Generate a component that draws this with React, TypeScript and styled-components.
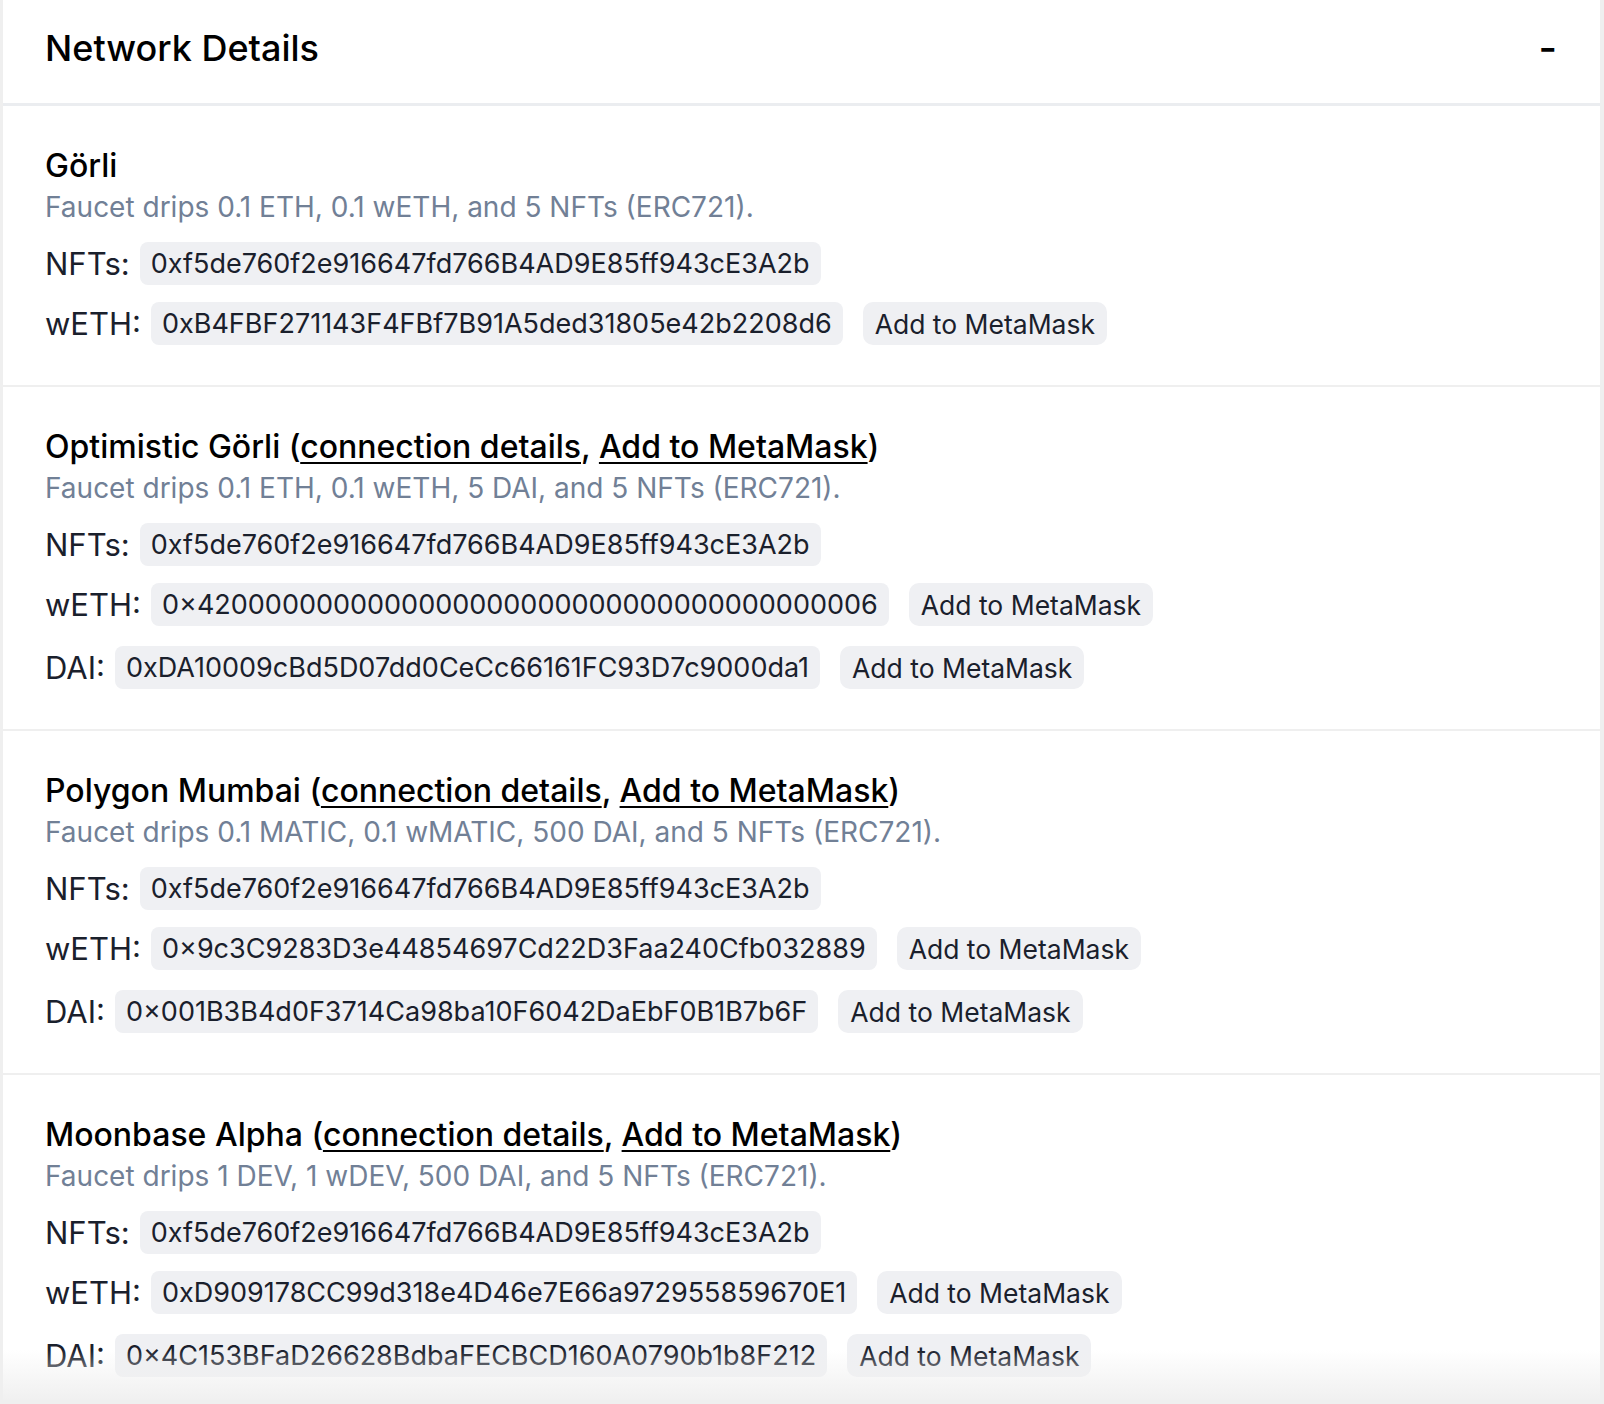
import React from "react";
import styled, { createGlobalStyle } from "styled-components";

const GlobalStyle = createGlobalStyle`
  html, body {
    margin: 0;
    padding: 0;
    background: #efefef;
    font-family: Inter, "Noto Sans", sans-serif;
  }
`;

const Page = styled.div`
  padding: 0 4px 4px 3px;
`;

const Card = styled.div`
  position: relative;
  height: 1400px;
  overflow: hidden;
  background: #fff;

  &::after {
    content: "";
    position: absolute;
    left: 0;
    right: 0;
    bottom: 0;
    height: 50px;
    background: linear-gradient(to bottom, rgba(240, 240, 240, 0), #f0f0f0);
    pointer-events: none;
  }
`;

const Header = styled.div`
  display: flex;
  align-items: center;
  justify-content: space-between;
  height: 95px;
  padding: 0 43px 8px 42px;
  border-bottom: 3px solid #ebedf0;
`;

const HeaderTitle = styled.h2`
  margin: 0;
  font-size: 36px;
  font-weight: 500;
  color: #000;
`;

const Collapse = styled.span`
  font-size: 40px;
  font-weight: 500;
  color: #000;
`;

const Section = styled.section`
  padding: 40px 42px 37px;
  border-bottom: 2px solid #efefef;
`;

const Title = styled.h3`
  margin: 0;
  font-size: 32px;
  line-height: 40px;
  font-weight: 500;
  color: #000;

  a {
    color: #000;
    text-decoration: underline;
    text-decoration-thickness: 2px;
    text-underline-offset: 4px;
  }
`;

const Description = styled.p`
  margin: 0 0 14px;
  font-size: 28px;
  line-height: 42px;
  color: #718096;
`;

const Rows = styled.div`
  display: flex;
  flex-direction: column;
  gap: 14px;
`;

const Row = styled.div`
  display: flex;
  align-items: center;
  min-height: 43px;
`;

const Label = styled.span`
  font-size: 31px;
  color: #1a202c;
  margin-right: 10px;
`;

const Address = styled.code`
  font-family: Inter, "Noto Sans", sans-serif;
  font-size: 27px;
  line-height: 43px;
  padding: 0 11px;
  border-radius: 8px;
  background: #eff0f3;
  color: #1a202c;
`;

const AddButton = styled.button`
  margin: 3px 0 3px 20px;
  height: 43px;
  padding: 0 12px;
  border: none;
  border-radius: 10px;
  background: #eff0f3;
  color: #1a202c;
  font-family: Inter, "Noto Sans", sans-serif;
  font-size: 26.5px;
  cursor: pointer;
`;

type Token = { label: string; address: string; addable?: boolean };

type Network = {
  name: string;
  links?: boolean;
  drips: string;
  tokens: Token[];
};

const NFT = "0xf5de760f2e916647fd766B4AD9E85ff943cE3A2b";

const networks: Network[] = [
  {
    name: "Görli",
    drips: "Faucet drips 0.1 ETH, 0.1 wETH, and 5 NFTs (ERC721).",
    tokens: [
      { label: "NFTs:", address: NFT },
      { label: "wETH:", address: "0xB4FBF271143F4FBf7B91A5ded31805e42b2208d6", addable: true },
    ],
  },
  {
    name: "Optimistic Görli",
    links: true,
    drips: "Faucet drips 0.1 ETH, 0.1 wETH, 5 DAI, and 5 NFTs (ERC721).",
    tokens: [
      { label: "NFTs:", address: NFT },
      { label: "wETH:", address: "0×4200000000000000000000000000000000000006", addable: true },
      { label: "DAI:", address: "0xDA10009cBd5D07dd0CeCc66161FC93D7c9000da1", addable: true },
    ],
  },
  {
    name: "Polygon Mumbai",
    links: true,
    drips: "Faucet drips 0.1 MATIC, 0.1 wMATIC, 500 DAI, and 5 NFTs (ERC721).",
    tokens: [
      { label: "NFTs:", address: NFT },
      { label: "wETH:", address: "0×9c3C9283D3e44854697Cd22D3Faa240Cfb032889", addable: true },
      { label: "DAI:", address: "0×001B3B4d0F3714Ca98ba10F6042DaEbF0B1B7b6F", addable: true },
    ],
  },
  {
    name: "Moonbase Alpha",
    links: true,
    drips: "Faucet drips 1 DEV, 1 wDEV, 500 DAI, and 5 NFTs (ERC721).",
    tokens: [
      { label: "NFTs:", address: NFT },
      { label: "wETH:", address: "0xD909178CC99d318e4D46e7E66a972955859670E1", addable: true },
      { label: "DAI:", address: "0×4C153BFaD26628BdbaFECBCD160A0790b1b8F212", addable: true },
    ],
  },
];

export default function App() {
  return (
    <>
      <GlobalStyle />
      <Page>
        <Card>
          <Header>
            <HeaderTitle>Network Details</HeaderTitle>
            <Collapse>-</Collapse>
          </Header>
          {networks.map((network) => (
            <Section key={network.name}>
              <Title>
                {network.name}
                {network.links && (
                  <>
                    {" ("}
                    <a href="#">connection details</a>, <a href="#">Add to MetaMask</a>)
                  </>
                )}
              </Title>
              <Description>{network.drips}</Description>
              <Rows>
                {network.tokens.map((token) => (
                  <Row key={token.label}>
                    <Label>{token.label}</Label>
                    <Address>{token.address}</Address>
                    {token.addable && <AddButton>Add to MetaMask</AddButton>}
                  </Row>
                ))}
              </Rows>
            </Section>
          ))}
        </Card>
      </Page>
    </>
  );
}
